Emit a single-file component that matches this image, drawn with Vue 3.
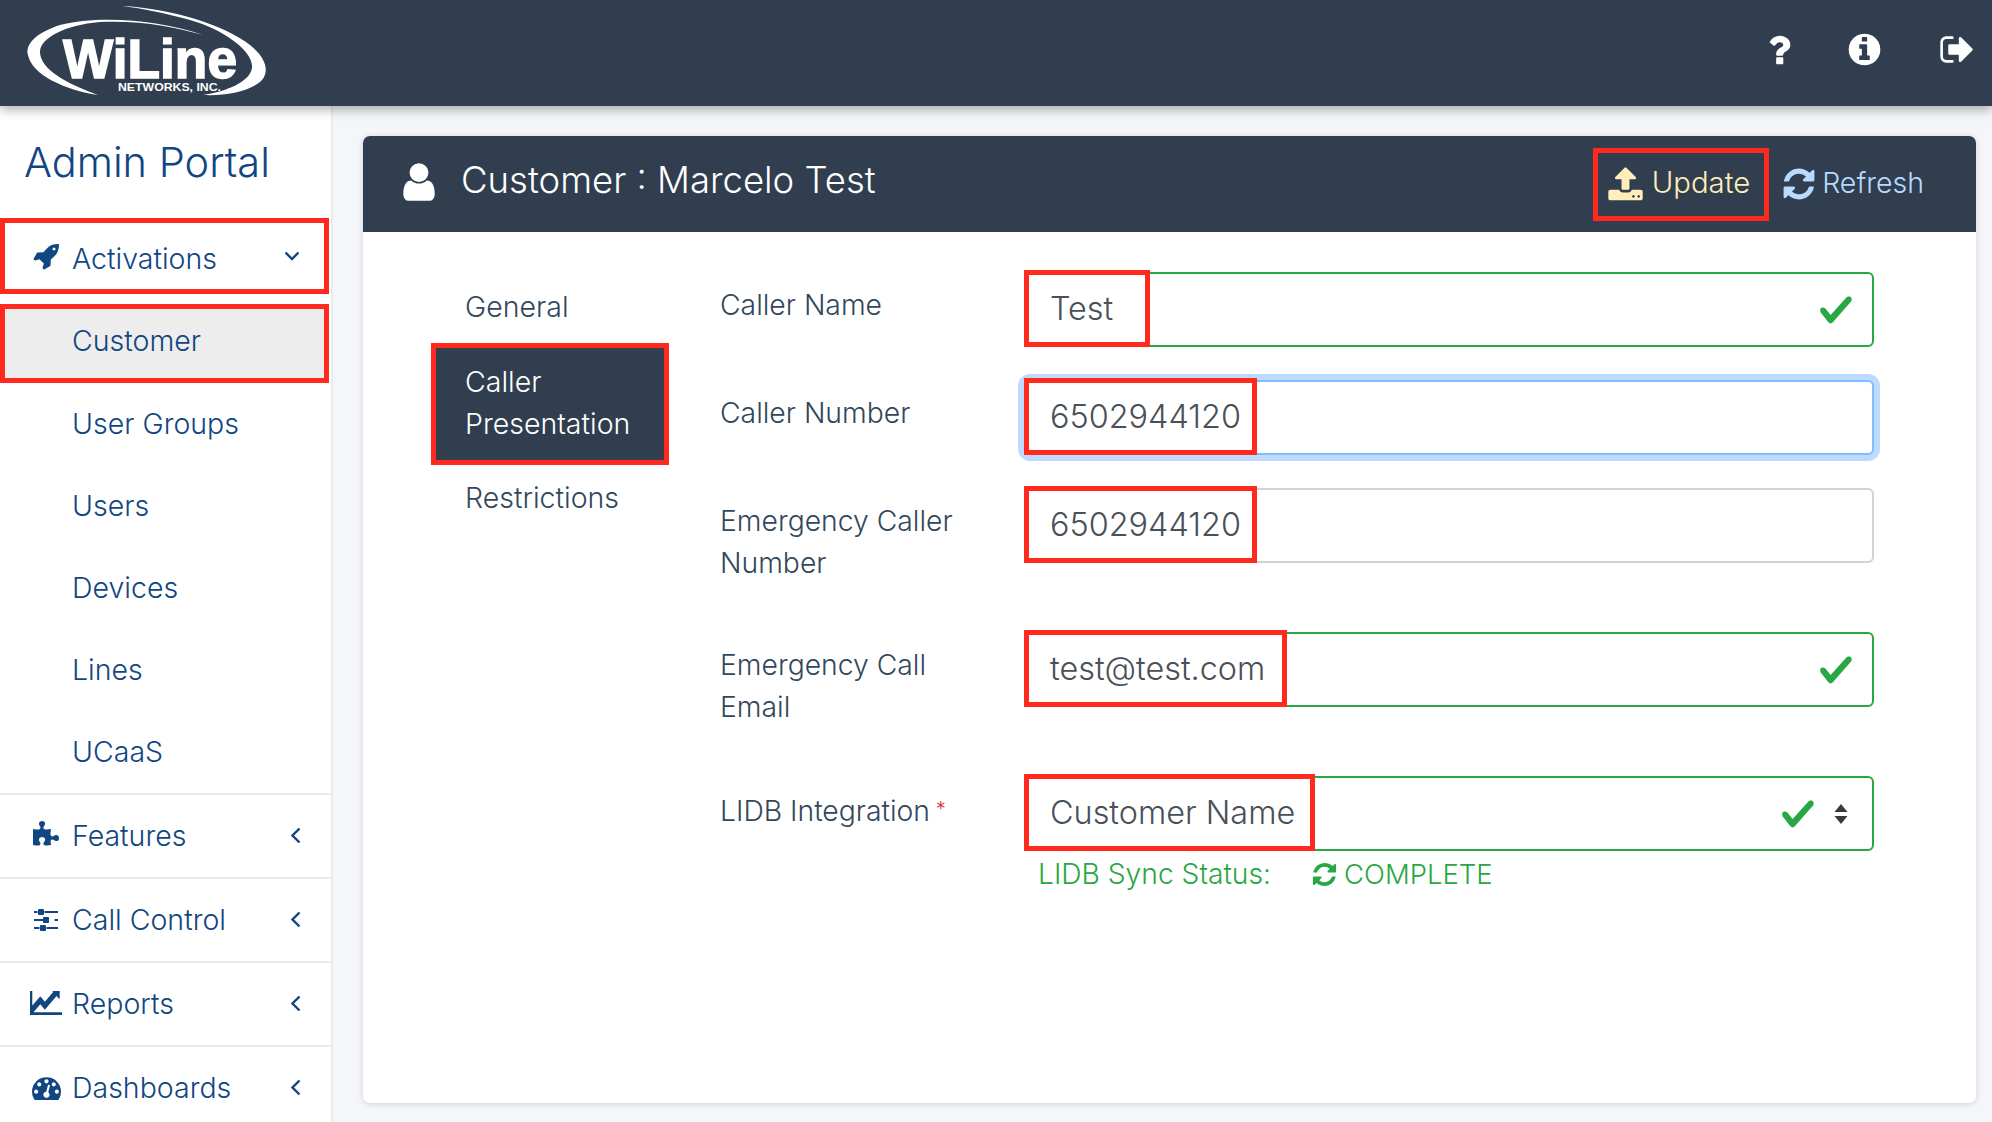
<script setup>
const icons = {
  rocket: 'M1504 448q0-40-28-68t-68-28-68 28-28 68 28 68 68 28 68-28 28-68zm224-288q0 249-75.5 430.5t-253.5 360.5q-81 80-195 176l-20 379q-2 16-16 26l-384 224q-7 4-16 4-12 0-23-9l-64-64q-13-14-8-32l85-276-281-281-276 85q-3 1-9 1-14 0-23-9l-64-64q-17-19-5-39l224-384q10-14 26-16l379-20q96-114 176-195 188-187 358-258t431-71q14 0 24 9.5t10 22.5z',
  puzzle: 'M1728 1098q0 81-44.5 135t-123.5 54q-41 0-77.5-17.5t-59-38-56.5-38-71-17.5q-110 0-110 124 0 39 16 115t15 115v5q-22 0-33 1-34 3-97.5 11.5t-115.5 13.5-98 5q-61 0-103-26.5t-42-83.5q0-37 17.5-71t38-56.5 38-59 17.5-77.5q0-79-54-123.5t-135-44.5q-84 0-143 45.5t-59 127.5q0 43 15 83t33.5 64.5 33.5 53 15 50.5q0 45-46 89-37 35-117 35-95 0-245-24-9-2-27.5-4t-27.5-4l-13-2q-1 0-3-1-2 0-2-1v-1024q2 1 17.5 3.5t34 5 21.5 3.5q150 24 245 24 80 0 117-35 46-44 46-89 0-22-15-50.5t-33.5-53-33.5-64.5-15-83q0-82 59-127.5t144-45.5q80 0 134 44.5t54 123.5q0 41-17.5 77.5t-38 59-38 56.5-17.5 71q0 57 42 83.5t103 26.5q64 0 180-15t163-17v2q-1 2-3.5 17.5t-5 34-3.5 21.5q-24 150-24 245 0 80 35 117 44 46 89 46 22 0 50.5-15t53-33.5 64.5-33.5 83-15q82 0 127.5 59t45.5 143z',
  sliders: 'M480 1408v128h-352v-128h352zm352-128q26 0 45 19t19 45v256q0 26-19 45t-45 19h-256q-26 0-45-19t-19-45v-256q0-26 19-45t45-19h256zm160-384v128h-864v-128h864zm-640-512v128h-224v-128h224zm1312 1024v128h-736v-128h736zm-960-1152q26 0 45 19t19 45v256q0 26-19 45t-45 19h-256q-26 0-45-19t-19-45v-256q0-26 19-45t45-19h256zm320 512q26 0 45 19t19 45v256q0 26-19 45t-45 19h-256q-26 0-45-19t-19-45v-256q0-26 19-45t45-19h256zm640 128v128h-224v-128h224zm0-512v128h-864v-128h864z',
  chart: 'M1920 1536v128h-1792v-1152h128v1024h1664zm-128-1120v435q0 21-19.5 29.5t-35.5-7.5l-121-121-633 633q-10 10-23 10t-23-10l-233-233-416 416-192-192 585-585q10-10 23-10t23 10l233 233 464-464-121-121q-16-16-7.5-35.5t29.5-19.5h435q14 0 23 9t9 23z',
  gauge: 'M384 1152q0-53-37.5-90.5t-90.5-37.5-90.5 37.5-37.5 90.5 37.5 90.5 90.5 37.5 90.5-37.5 37.5-90.5zm192-448q0-53-37.5-90.5t-90.5-37.5-90.5 37.5-37.5 90.5 37.5 90.5 90.5 37.5 90.5-37.5 37.5-90.5zm428 481l101-382q6-26-7.5-48.5t-38.5-29.5-48 6.5-30 39.5l-101 382q-60 5-107 43.5t-63 98.5q-20 77 20 146t117 89 146-20 89-117q16-60-6-117t-72-91zm660-33q0-53-37.5-90.5t-90.5-37.5-90.5 37.5-37.5 90.5 37.5 90.5 90.5 37.5 90.5-37.5 37.5-90.5zm-640-640q0-53-37.5-90.5t-90.5-37.5-90.5 37.5-37.5 90.5 37.5 90.5 90.5 37.5 90.5-37.5 37.5-90.5zm448 192q0-53-37.5-90.5t-90.5-37.5-90.5 37.5-37.5 90.5 37.5 90.5 90.5 37.5 90.5-37.5 37.5-90.5zm320 448q0 261-141 483-19 29-54 29h-1402q-35 0-54-29-141-221-141-483 0-182 71-348t191-286 286-191 348-71 348 71 286 191 191 286 71 348z',
  refresh: 'M1639 1056q0 5-1 7-64 268-268 434.5t-478 166.5q-146 0-282.5-55t-243.5-157l-129 129q-19 19-45 19t-45-19-19-45v-448q0-26 19-45t45-19h448q26 0 45 19t19 45-19 45l-137 137q71 66 161 102t187 36q134 0 250-65t186-179q11-17 53-117 8-23 30-23h192q13 0 22.5 9.5t9.5 22.5zm25-800v448q0 26-19 45t-45 19h-448q-26 0-45-19t-19-45 19-45l138-138q-148-137-349-137-134 0-250 65t-186 179q-11 17-53 117-8 23-30 23h-199q-13 0-22.5-9.5t-9.5-22.5v-7q65-268 270-434.5t480-166.5q146 0 284 55.5t245 156.5l130-129q19-19 45-19t45 19 19 45z',
  user: 'M1536 1399q0 109-62.5 187t-150.5 78h-854q-88 0-150.5-78t-62.5-187q0-85 8.5-160.5t31.5-152 58.5-131 94-89 134.5-34.5q131 128 313 128t313-128q76 0 134.5 34.5t94 89 58.5 131 31.5 152 8.5 160.5zm-256-887q0 159-112.5 271.5t-271.5 112.5-271.5-112.5-112.5-271.5 112.5-271.5 271.5-112.5 271.5 112.5 112.5 271.5z',
  info: 'M1152 1376v-160q0-14-9-23t-23-9h-96v-512q0-14-9-23t-23-9h-320q-14 0-23 9t-9 23v160q0 14 9 23t23 9h96v320h-96q-14 0-23 9t-9 23v160q0 14 9 23t23 9h448q14 0 23-9t9-23zm-128-896v-160q0-14-9-23t-23-9h-192q-14 0-23 9t-9 23v160q0 14 9 23t23 9h192q14 0 23-9t9-23zm640 416q0 209-103 385.5t-279.5 279.5-385.5 103-385.5-103-279.5-279.5-103-385.5 103-385.5 279.5-279.5 385.5-103 385.5 103 279.5 279.5 103 385.5z',
  question: 'M1088 1256v240q0 16-12 28t-28 12h-240q-16 0-28-12t-12-28v-240q0-16 12-28t28-12h240q16 0 28 12t12 28zm316-600q0 54-15.5 101t-35 76.5-55 59.5-57.5 43.5-61 35.5q-41 23-68.5 65t-27.5 67q0 17-12 32.5t-28 15.5h-240q-15 0-25.5-18.5t-10.5-37.5v-45q0-83 65-156.5t143-108.5q59-27 84-56t25-76q0-42-46.5-74t-107.5-32q-65 0-108 29-35 25-107 115-13 16-31 16-12 0-25-8l-164-125q-13-10-15.5-25t5.5-28q160-266 464-266 80 0 161 31t146 83 106 127.5 41 158.5z',
  signout: 'M704 1440q0 4 1 20t.5 26.5-3 23.5-10 19.5-20.5 6.5h-320q-119 0-203.5-84.5t-84.5-203.5v-704q0-119 84.5-203.5t203.5-84.5h320q13 0 22.5 9.5t9.5 22.5q0 4 1 20t.5 26.5-3 23.5-10 19.5-20.5 6.5h-320q-66 0-113 47t-47 113v704q0 66 47 113t113 47h312l11.5 1 11.5 3 8 5.5 7 9 2 13.5zm928-544q0 26-19 45l-544 544q-19 19-45 19t-45-19-19-45v-288h-448q-26 0-45-19t-19-45v-384q0-26 19-45t45-19h448v-288q0-26 19-45t45-19 45 19l544 544q19 19 19 45z',
  upload: 'M1344 1472q0-26-19-45t-45-19-45 19-19 45 19 45 45 19 45-19 19-45zm256 0q0-26-19-45t-45-19-45 19-19 45 19 45 45 19 45-19 19-45zm128-224v320q0 40-28 68t-68 28h-1472q-40 0-68-28t-28-68v-320q0-40 28-68t68-28h427q21 56 70.5 92t110.5 36h256q61 0 110.5-36t70.5-92h427q40 0 68 28t28 68zm-325-648q-17 40-59 40h-256v448q0 26-19 45t-45 19h-256q-26 0-45-19t-19-45v-448h-256q-42 0-59-40-17-39 14-69l448-448q19-19 45-19t45 19l448 448q31 30 14 69z'
}

const checkPath = 'M2.3 6.73L.6 4.53c-.4-1.04.46-1.4 1.1-.8l1.1 1.4 3.4-3.8c.6-.63 1.6-.27 1.2.7l-4 4.6c-.43.5-.8.4-1.1.1z'

const subItems = ['User Groups', 'Users', 'Devices', 'Lines', 'UCaaS']
const groups = [
  { label: 'Features', icon: 'puzzle', w: 28, h: 28, vb: '0 0 1792 1792' },
  { label: 'Call Control', icon: 'sliders', w: 28, h: 28, vb: '0 0 1792 1792' },
  { label: 'Reports', icon: 'chart', w: 32, h: 24, vb: '128 512 1792 1152' },
  { label: 'Dashboards', icon: 'gauge', w: 29, h: 29, vb: '0 0 1792 1792' }
]

const fields = [
  { label: ['Caller Name'], value: 'Test', state: 'valid', mark: 126 },
  { label: ['Caller Number'], value: '6502944120', state: 'focus', mark: 233 },
  { label: ['Emergency Caller', 'Number'], value: '6502944120', state: '', mark: 233 },
  { label: ['Emergency Call', 'Email'], value: 'test@test.com', state: 'valid', mark: 263 },
  { label: ['LIDB Integration'], required: true, value: 'Customer Name', state: 'valid', mark: 291, select: true }
]
</script>

<template>
  <div class="page">
    <header class="topbar">
      <svg class="logo" viewBox="0 0 280 106" width="280" height="106">
        <path fill="#fff" d="M203 35C160 20 100 15 60 25C35 33 25 45 28 55C32 75 65 90 98 95C70 85 40 70 40 52C40 38 65 25 100 22C140 20 175 27 203 35Z" />
        <path fill="#fff" d="M122 6C170 8 225 25 250 45C265 57 270 70 262 80C250 92 225 96 203 95C225 92 250 82 252 68C254 52 225 30 190 20C165 13 140 8 122 6Z" />
        <text x="63" y="78" class="logo-name" textLength="174" lengthAdjust="spacingAndGlyphs">WiLine</text>
        <text x="118" y="91" class="logo-sub" textLength="103" lengthAdjust="spacingAndGlyphs">NETWORKS, INC.</text>
      </svg>
      <div class="top-actions">
        <svg class="top-q" viewBox="0 0 1792 1792"><path :d="icons.question" /></svg>
        <svg class="top-i" viewBox="0 0 1792 1792"><path :d="icons.info" /></svg>
        <svg class="top-s" viewBox="0 0 1792 1792"><path :d="icons.signout" /></svg>
      </div>
    </header>

    <div class="layout">
      <aside class="sidebar">
        <div class="brand">Admin Portal</div>

        <div class="nav-row activations hl">
          <span class="nav-icon"><svg viewBox="0 0 1792 1792" width="28" height="28"><path :d="icons.rocket" /></svg></span>
          <span class="nav-text">Activations</span>
          <svg class="chev-down" viewBox="0 0 16 10" width="16" height="10"><path d="M1.5 1.5L8 8l6.5-6.5" /></svg>
        </div>

        <div class="sub-list">
          <div class="sub-item current hl"><span>Customer</span></div>
          <div v-for="item in subItems" :key="item" class="sub-item">{{ item }}</div>
        </div>

        <div v-for="g in groups" :key="g.label" class="nav-row group">
          <span class="nav-icon"><svg :viewBox="g.vb" :width="g.w" :height="g.h" preserveAspectRatio="none"><path :d="icons[g.icon]" /></svg></span>
          <span class="nav-text">{{ g.label }}</span>
          <svg class="chev-left" viewBox="0 0 10 17" width="10" height="17"><path d="M8.5 1.5L1.5 8.5l7 7" /></svg>
        </div>
      </aside>

      <main class="content">
        <section class="panel">
          <div class="panel-head">
            <svg class="head-user" viewBox="0 0 1792 1792" width="44" height="44"><path :d="icons.user" /></svg>
            <h1 class="head-title">Customer : Marcelo Test</h1>
            <div class="head-btn update">
              <svg viewBox="0 0 1792 1792" width="37" height="37"><path :d="icons.upload" /></svg>
              <span>Update</span>
            </div>
            <div class="head-btn refresh">
              <svg viewBox="0 0 1792 1792" width="36" height="36"><path :d="icons.refresh" /></svg>
              <span>Refresh</span>
            </div>
          </div>

          <div class="panel-body">
            <nav class="tabs">
              <div class="tab">General</div>
              <div class="tab active">Caller Presentation</div>
              <div class="tab last">Restrictions</div>
            </nav>

            <form class="form" @submit.prevent>
              <div v-for="f in fields" :key="f.label[0]" class="form-row">
                <label class="form-label">
                  <span v-for="line in f.label" :key="line" class="label-line">{{ line }}<span v-if="f.required" class="req"> *</span></span>
                </label>
                <div class="form-ctrl">
                  <div class="field" :class="f.state">
                    <span class="mark" :style="{ width: f.mark + 'px' }">{{ f.value }}</span>
                    <svg v-if="f.state === 'valid'" class="check" viewBox="0 0 8 8" width="36" height="36"><path :d="checkPath" /></svg>
                    <svg v-if="f.select" class="arrows" viewBox="0 0 16 20" width="16" height="20"><path d="M8 0l6.5 8h-13zM8 20L1.5 12h13z" /></svg>
                  </div>
                  <div v-if="f.select" class="sync">
                    <span class="sync-label">LIDB Sync Status:</span>
                    <svg viewBox="0 0 1792 1792" width="27" height="27"><path :d="icons.refresh" /></svg>
                    <span>COMPLETE</span>
                  </div>
                </div>
              </div>
            </form>
          </div>
        </section>
      </main>
    </div>
  </div>
</template>

<style>
html, body { margin: 0; background: #f4f6f9; }
</style>

<style scoped>
.page {
  width: 1992px;
  height: 1122px;
  overflow: hidden;
  font-family: Inter, "Open Sans", sans-serif;
  font-weight: 300;
  background: #f4f6f9;
}

.topbar {
  position: relative;
  z-index: 2;
  height: 106px;
  display: flex;
  align-items: center;
  justify-content: space-between;
  background: #303e4f;
  box-shadow: 0 4px 10px rgba(0, 0, 0, .3);
}
.logo { flex: none; }
.logo-name { font: 700 56px "Liberation Sans", sans-serif; fill: #fff; stroke: #fff; stroke-width: 1.6px; }
.logo-sub { font: 700 11px "Liberation Sans", sans-serif; fill: #fff; }
.top-actions { display: flex; align-items: center; padding: 0 16px 7px 0; fill: #fff; }
.top-q { width: 40px; height: 40px; margin-right: 47px; }
.top-i { width: 37px; height: 37px; margin-right: 56px; }
.top-s { width: 37px; height: 37px; }

.layout { display: flex; height: 1016px; }

.sidebar {
  width: 331px;
  flex: none;
  background: #fff;
  border-right: 2px solid #e9ecef;
  color: #114682;
}
.brand {
  height: 112px;
  box-sizing: border-box;
  padding: 30px 0 0 24px;
  font-size: 41.5px;
  line-height: 52px;
  color: #114682;
}
.hl { outline: 5px solid #ff2a1d; outline-offset: -5px; }

.nav-row {
  display: flex;
  align-items: center;
  font-size: 28.5px;
  padding-left: 30px;
  box-sizing: border-box;
  fill: #114682;
}
.activations { height: 76px; width: 329px; }
.activations .nav-text { padding-top: 5px; }
.group { height: 84px; border-top: 2px solid #e9ecef; padding-bottom: 2px; }
.nav-icon {
  width: 32px;
  margin-right: 10px;
  display: flex;
  justify-content: center;
  align-items: center;
}
.nav-text { flex: 1; }
.chev-down, .chev-left { fill: none; stroke: #114682; stroke-width: 2.4; }
.chev-down { margin-right: 29px; }
.chev-left { margin-right: 30px; }

.sub-list { padding-top: 10px; }
.sub-item {
  height: 82px;
  box-sizing: border-box;
  display: flex;
  align-items: center;
  padding: 0 0 2px 72px;
  font-size: 28.5px;
}
.sub-item.current {
  height: 79px;
  width: 329px;
  padding-bottom: 6px;
  background: #ededed;
}

.content {
  flex: 1;
  padding: 30px 16px 19px 30px;
  min-width: 0;
}
.panel {
  height: 100%;
  display: flex;
  flex-direction: column;
  background: #fff;
  border-radius: 7px;
  box-shadow: 0 1px 6px rgba(0, 0, 0, .15);
  overflow: hidden;
}
.panel-head {
  height: 96px;
  flex: none;
  display: flex;
  align-items: center;
  padding: 0 52px 0 34px;
  background: #303e4f;
}
.head-user { fill: #fff; margin-bottom: 4px; }
.head-title {
  flex: 1;
  margin: 0 0 8px 20px;
  font-size: 36.5px;
  font-weight: 300;
  color: #fff;
}
.head-btn {
  display: flex;
  align-items: center;
  font-size: 28.5px;
  box-sizing: border-box;
}
.head-btn span { padding-bottom: 4px; }
.update {
  height: 73px;
  padding: 0 14px 0 9px;
  border: 5px solid #ff2a1d;
  color: #ffeeba;
  fill: #ffeeba;
  font-size: 29.3px;
  gap: 8px;
}
.refresh {
  margin-left: 12px;
  color: #b8daff;
  fill: #b8daff;
  gap: 5px;
}

.panel-body { flex: 1; display: flex; padding-right: 102px; }
.tabs {
  width: 238px;
  flex: none;
  margin: 39px 51px 0 68px;
  color: #33475b;
  font-size: 28.5px;
  line-height: 42px;
}
.tab { padding: 15px 34px; box-sizing: border-box; }
.tab.last { padding-top: 12px; }
.tab.active {
  padding: 13px 29px 15px;
  border: 5px solid #ff2a1d;
  background: #303e4f;
  color: #fff;
}

.form { flex: 1; padding-top: 40px; }
.form-row { display: flex; margin-bottom: 33px; }
.form-label {
  width: 304px;
  flex: none;
  padding: 12px 0 15px;
  color: #33475b;
  font-size: 28.3px;
  line-height: 42px;
}
.label-line { display: block; }
.req { color: #dc3545; font-size: 20px; vertical-align: 5px; }
.form-ctrl { flex: 1; }

.field {
  position: relative;
  height: 75px;
  box-sizing: border-box;
  display: flex;
  align-items: center;
  justify-content: flex-end;
  padding-right: 18px;
  border: 2px solid #ced4da;
  border-radius: 6px;
  background: #fff;
}
.field.valid { border-color: #28a745; }
.field.focus { border-color: #80bdff; box-shadow: 0 0 0 6px #bedaff; }
.mark {
  position: absolute;
  left: -2px;
  top: -4px;
  height: 77px;
  box-sizing: border-box;
  display: flex;
  align-items: center;
  padding-left: 21px;
  border: 5px solid #ff2a1d;
  background: #fff;
  color: #495057;
  font-size: 32.4px;
  white-space: nowrap;
}
.check { fill: #28a745; }
.arrows { fill: #343a40; margin-left: 17px; margin-right: 5px; }

.sync {
  display: flex;
  align-items: center;
  padding: 5px 0 0 14px;
  color: #28a745;
  fill: #28a745;
  font-size: 27.5px;
  line-height: 36px;
  gap: 6px;
}
.sync-label { width: 267px; font-size: 28.2px; }
</style>
